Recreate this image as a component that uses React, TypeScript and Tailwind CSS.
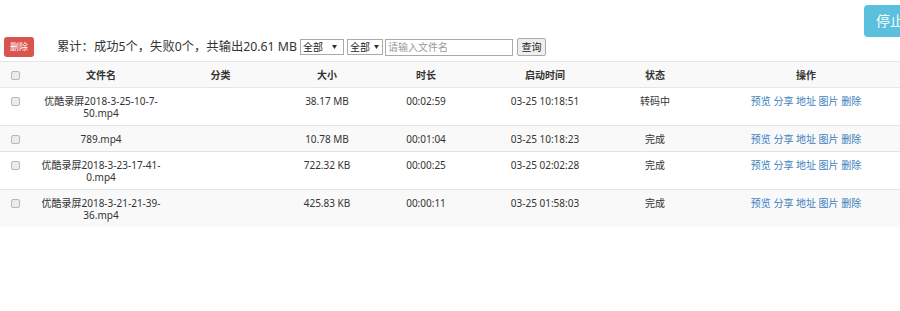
import React from "react";

const font = { fontFamily: '"Noto Sans", "Noto Sans CJK SC", sans-serif' };

const rows = [
  { name: "优酷录屏2018-3-25-10-7-50.mp4", size: "38.17 MB", dur: "00:02:59", start: "03-25 10:18:51", status: "转码中" },
  { name: "789.mp4", size: "10.78 MB", dur: "00:01:04", start: "03-25 10:18:23", status: "完成" },
  { name: "优酷录屏2018-3-23-17-41-0.mp4", size: "722.32 KB", dur: "00:00:25", start: "03-25 02:02:28", status: "完成" },
  { name: "优酷录屏2018-3-21-21-39-36.mp4", size: "425.83 KB", dur: "00:00:11", start: "03-25 01:58:03", status: "完成" },
];

function Box() {
  return <span className="inline-block w-[9px] h-[9px] border border-[#b8b8b8] rounded-[2px] bg-[#ececec] align-top mt-[2px]" />;
}

function Caret() {
  return (
    <svg width="5" height="4" viewBox="0 0 5 4" className="shrink-0">
      <path d="M0 0 L5 0 L2.5 4 Z" fill="#333" />
    </svg>
  );
}

export default function App() {
  return (
    <div className="w-[900px] h-[311px] overflow-hidden bg-white text-[#333]" style={font}>
      <div className="w-[924px]">
        <div className="flex justify-end pt-[5px] pr-[8px]">
          <button className="h-[32px] px-[12px] rounded-[4px] bg-[#5bc0de] text-white text-[14px] leading-[32px]">停止</button>
        </div>
        <div className="flex items-center h-[20px] pl-[4px]">
          <button className="w-[30px] h-[20px] rounded-[3px] bg-[#d9534f] text-white text-[9px] leading-[20px] text-center">删除</button>
          <span className="ml-[23px] text-[12.3px] leading-[20px] text-[#333] whitespace-nowrap">累计：成功5个，失败0个，共输出20.61 MB</span>
          <div className="ml-[3px] w-[44px] h-[16px] border border-[#aaa] bg-white flex items-center justify-between pl-[2px] pr-[6px] text-[10px] text-[#222]">
            <span>全部</span><Caret />
          </div>
          <div className="ml-[3px] w-[36px] h-[16px] border border-[#aaa] bg-white flex items-center justify-between pl-[2px] pr-[3px] text-[10px] text-[#222]">
            <span>全部</span><Caret />
          </div>
          <div className="ml-[2px] w-[128px] h-[17px] border border-[#aaa] bg-white flex items-center px-[2px] text-[10px] text-[#999]">
            请输入文件名
          </div>
          <button className="ml-[4px] w-[29px] h-[18px] border border-[#aaa] rounded-[2px] bg-[#efefef] text-[10px] text-[#222] leading-[16px]">查询</button>
        </div>
        <table className="mt-[4px] w-[924px] table-fixed border-collapse text-[10px] leading-[12px]">
          <colgroup>
            <col className="w-[31px]" />
            <col className="w-[140px]" />
            <col className="w-[99px]" />
            <col className="w-[114px]" />
            <col className="w-[84px]" />
            <col className="w-[154px]" />
            <col className="w-[66px]" />
            <col className="w-[236px]" />
          </colgroup>
          <thead>
            <tr className="bg-[#f9f9f9] border-t border-b border-[#e6e6e6]">
              <th className="pt-[7px] pb-[6px] text-center align-top"><Box /></th>
              <th className="pt-[7px] pb-[6px] text-center font-bold">文件名</th>
              <th className="pt-[7px] pb-[6px] text-center font-bold">分类</th>
              <th className="pt-[7px] pb-[6px] text-center font-bold">大小</th>
              <th className="pt-[7px] pb-[6px] text-center font-bold">时长</th>
              <th className="pt-[7px] pb-[6px] text-center font-bold">启动时间</th>
              <th className="pt-[7px] pb-[6px] text-center font-bold">状态</th>
              <th className="pt-[7px] pb-[6px] text-center font-bold">操作</th>
            </tr>
          </thead>
          <tbody>
            {rows.map((r, i) => (
              <tr key={i} className={(i % 2 === 1 ? "bg-[#f9f9f9] " : "bg-white ") + "border-t border-[#e3e3e3]"}>
                <td className="pt-[7px] pb-[6px] text-center align-top"><Box /></td>
                <td className="pt-[7px] pb-[6px] px-[6px] text-center align-top">{r.name}</td>
                <td className="pt-[7px] pb-[6px] align-top"></td>
                <td className="pt-[7px] pb-[6px] text-center align-top">{r.size}</td>
                <td className="pt-[7px] pb-[6px] text-center align-top">{r.dur}</td>
                <td className="pt-[7px] pb-[6px] text-center align-top">{r.start}</td>
                <td className="pt-[7px] pb-[6px] text-center align-top">{r.status}</td>
                <td className="pt-[7px] pb-[6px] text-center align-top text-[#3c7fbd]">预览 分享 地址 图片 删除</td>
              </tr>
            ))}
          </tbody>
        </table>
      </div>
    </div>
  );
}
